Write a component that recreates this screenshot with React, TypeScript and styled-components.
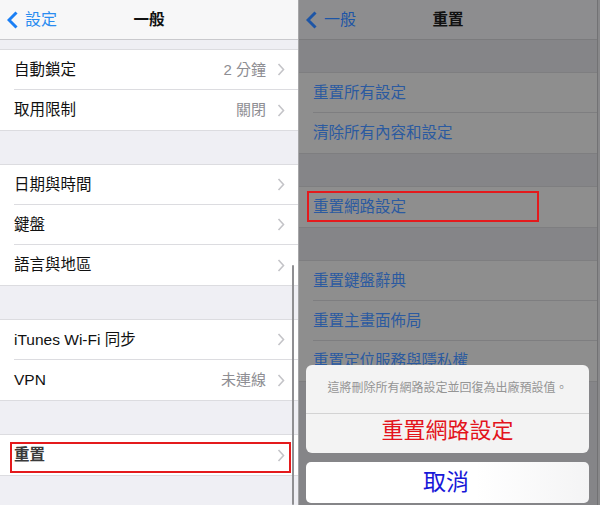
import styled, { createGlobalStyle } from "styled-components";

const sans = `"Liberation Sans", "Noto Sans CJK TC", sans-serif`;

const GlobalStyle = createGlobalStyle`
  html, body {
    margin: 0;
    padding: 0;
  }
  body {
    width: 600px;
    height: 505px;
    overflow: hidden;
    background: #88888a;
    font-family: ${sans};
  }
`;

type Item = { label: string; value?: string; mark?: boolean };

const generalGroups: Item[][] = [
  [
    { label: "自動鎖定", value: "2 分鐘" },
    { label: "取用限制", value: "關閉" },
  ],
  [{ label: "日期與時間" }, { label: "鍵盤" }, { label: "語言與地區" }],
  [{ label: "iTunes Wi-Fi 同步" }, { label: "VPN", value: "未連線" }],
  [{ label: "重置", mark: true }],
];

const resetGroups: Item[][] = [
  [{ label: "重置所有設定" }, { label: "清除所有內容和設定" }],
  [{ label: "重置網路設定", mark: true }],
  [
    { label: "重置鍵盤辭典" },
    { label: "重置主畫面佈局" },
    { label: "重置定位服務與隱私權" },
  ],
];

const light = {
  nav: "#f7f7f8",
  navLine: "#c9c9cd",
  gap: "#efeff4",
  row: "#ffffff",
  line: "#dcdce0",
  text: "#111111",
  back: "#1a7ff5",
};

const dim = {
  nav: "#8d8d8f",
  navLine: "#7b7b7d",
  gap: "#858588",
  row: "#8e8e8e",
  line: "#7e7e80",
  text: "#2b5aa0",
  back: "#1d55a6",
};

type Palette = typeof light;

function Chevron({ color = "#c4c4c8" }: { color?: string }) {
  return (
    <svg width="8" height="13" viewBox="0 0 8 13">
      <polyline
        points="1.5,1 6.5,6.5 1.5,12"
        fill="none"
        stroke={color}
        strokeWidth="1.6"
      />
    </svg>
  );
}

function BackArrow({ color }: { color: string }) {
  return (
    <svg width="11" height="18" viewBox="0 0 11 18">
      <polyline
        points="9.5,1.5 2,9 9.5,16.5"
        fill="none"
        stroke={color}
        strokeWidth="3"
        strokeLinejoin="miter"
      />
    </svg>
  );
}

function App() {
  return (
    <>
      <GlobalStyle />
      <Screen>
        <LeftPanel>
          <NavBar $p={light}>
            <Back $color="#2a8cf0">
              <BackArrow color={light.back} />
              <span>設定</span>
            </Back>
            <NavTitle>一般</NavTitle>
          </NavBar>
          <Gap $p={light} $h={9} />
          {generalGroups.map((group, gi) => (
            <div key={gi}>
              {gi > 0 && <Gap $p={light} $h={33} />}
              <Group $p={light}>
                {group.map((item) => (
                  <Row key={item.label} $p={light}>
                    <Cell>
                      <Label $bold={item.mark}>{item.label}</Label>
                      {item.value && <Value>{item.value}</Value>}
                      <Chevron />
                    </Cell>
                    {item.mark && (
                      <Mark $left={10} $top={7} $width={281} $height={31} />
                    )}
                  </Row>
                ))}
              </Group>
            </div>
          ))}
          <Gap $p={light} $h={40} />
          <ScrollThumb />
        </LeftPanel>

        <RightPanel>
          <NavBar $p={dim}>
            <Back $color={dim.back}>
              <BackArrow color={dim.back} />
              <span>一般</span>
            </Back>
            <NavTitle>重置</NavTitle>
          </NavBar>
          {resetGroups.map((group, gi) => (
            <div key={gi}>
              <Gap $p={dim} $h={32} />
              <Group $p={dim}>
                {group.map((item) => (
                  <Row key={item.label} $p={dim}>
                    <Cell>
                      <ActionLabel>{item.label}</ActionLabel>
                    </Cell>
                    {item.mark && (
                      <Mark $left={8} $top={4} $width={232} $height={31} />
                    )}
                  </Row>
                ))}
              </Group>
            </div>
          ))}

          <Sheet>
            <SheetCard>
              <SheetMessage>這將刪除所有網路設定並回復為出廠預設值。</SheetMessage>
              <Destructive>重置網路設定</Destructive>
            </SheetCard>
            <CancelCard>
              <span>取消</span>
            </CancelCard>
          </Sheet>
        </RightPanel>
      </Screen>
    </>
  );
}

const Screen = styled.div`
  display: flex;
  width: 600px;
  height: 505px;
  overflow: hidden;
`;

const LeftPanel = styled.div`
  position: relative;
  width: 298px;
  border-right: 1px solid #a6a6a8;
  background: ${light.gap};
  display: flex;
  flex-direction: column;
  overflow: hidden;
`;

const RightPanel = styled.div`
  position: relative;
  width: 298px;
  border-right: 1px solid #727274;
  background: ${dim.gap};
  display: flex;
  flex-direction: column;
  overflow: hidden;
`;

const NavBar = styled.div<{ $p: Palette }>`
  position: relative;
  height: 39px;
  flex-shrink: 0;
  display: flex;
  align-items: center;
  justify-content: center;
  background: ${(p) => p.$p.nav};
  border-bottom: 1px solid ${(p) => p.$p.navLine};
`;

const Back = styled.div<{ $color: string }>`
  position: absolute;
  left: 7px;
  top: 11px;
  display: flex;
  align-items: center;
  gap: 7px;
  color: ${(p) => p.$color};
  font-size: 16px;
  line-height: 18px;
`;

const NavTitle = styled.div`
  font-size: 15.5px;
  font-weight: 700;
  color: #111;
  line-height: 18px;
  margin-top: 1px;
`;

const Gap = styled.div<{ $p: Palette; $h: number }>`
  height: ${(p) => p.$h}px;
  flex-shrink: 0;
  background: ${(p) => p.$p.gap};
`;

const Group = styled.div<{ $p: Palette }>`
  border-top: 1px solid ${(p) => p.$p.line};
  border-bottom: 1px solid ${(p) => p.$p.line};
`;

const Row = styled.div<{ $p: Palette }>`
  position: relative;
  display: flex;
  padding-left: 14px;
  background: ${(p) => p.$p.row};

  &:not(:last-child) > div:first-child {
    border-bottom: 1px solid ${(p) => p.$p.line};
  }
`;

const Cell = styled.div`
  flex: 1;
  height: 40px;
  box-sizing: border-box;
  display: flex;
  align-items: center;
  padding-right: 13px;
`;

const Label = styled.span<{ $bold?: boolean }>`
  flex: 1;
  font-size: 15.5px;
  color: ${(p) => (p.$bold ? "#3a3a3a" : "#111")};
  font-weight: ${(p) => (p.$bold ? 700 : 400)};
  line-height: 18px;
`;

const Value = styled.span`
  font-size: 15px;
  color: #8e8e93;
  margin-right: 11px;
  line-height: 18px;
`;

const ActionLabel = styled.span`
  font-size: 15.5px;
  color: ${dim.text};
  line-height: 18px;
`;

const Mark = styled.div<{
  $left: number;
  $top: number;
  $width: number;
  $height: number;
}>`
  position: absolute;
  left: ${(p) => p.$left}px;
  top: ${(p) => p.$top}px;
  width: ${(p) => p.$width}px;
  height: ${(p) => p.$height}px;
  box-sizing: border-box;
  border: 2px solid #e41a1c;
`;

const ScrollThumb = styled.div`
  position: absolute;
  right: 4px;
  top: 265px;
  bottom: 0;
  width: 2px;
  border-radius: 1px;
  background: #8f8f92;
`;

const Sheet = styled.div`
  position: absolute;
  left: 7px;
  top: 365px;
  width: 283px;
  display: flex;
  flex-direction: column;
  gap: 9px;
`;

const SheetCard = styled.div`
  background: #f3f3f3;
  border-radius: 6px;
  overflow: hidden;
`;

const SheetMessage = styled.div`
  height: 42px;
  padding-bottom: 6px;
  display: flex;
  align-items: center;
  justify-content: center;
  font-size: 12px;
  color: #959595;
  border-bottom: 1px solid #d3d3d3;
`;

const Destructive = styled.div`
  height: 39px;
  padding-bottom: 11px;
  box-sizing: border-box;
  display: flex;
  align-items: center;
  justify-content: center;
  font-size: 22px;
  color: #e3141c;
`;

const CancelCard = styled.div`
  height: 41px;
  background: linear-gradient(to right, #ffffff 60%, #f4f4f5 100%);
  border-radius: 5px;
  display: flex;
  align-items: center;
  padding-left: 117px;
  padding-bottom: 5px;
  box-sizing: border-box;
  font-size: 23px;
  color: #1818d8;
`;

export default App;
